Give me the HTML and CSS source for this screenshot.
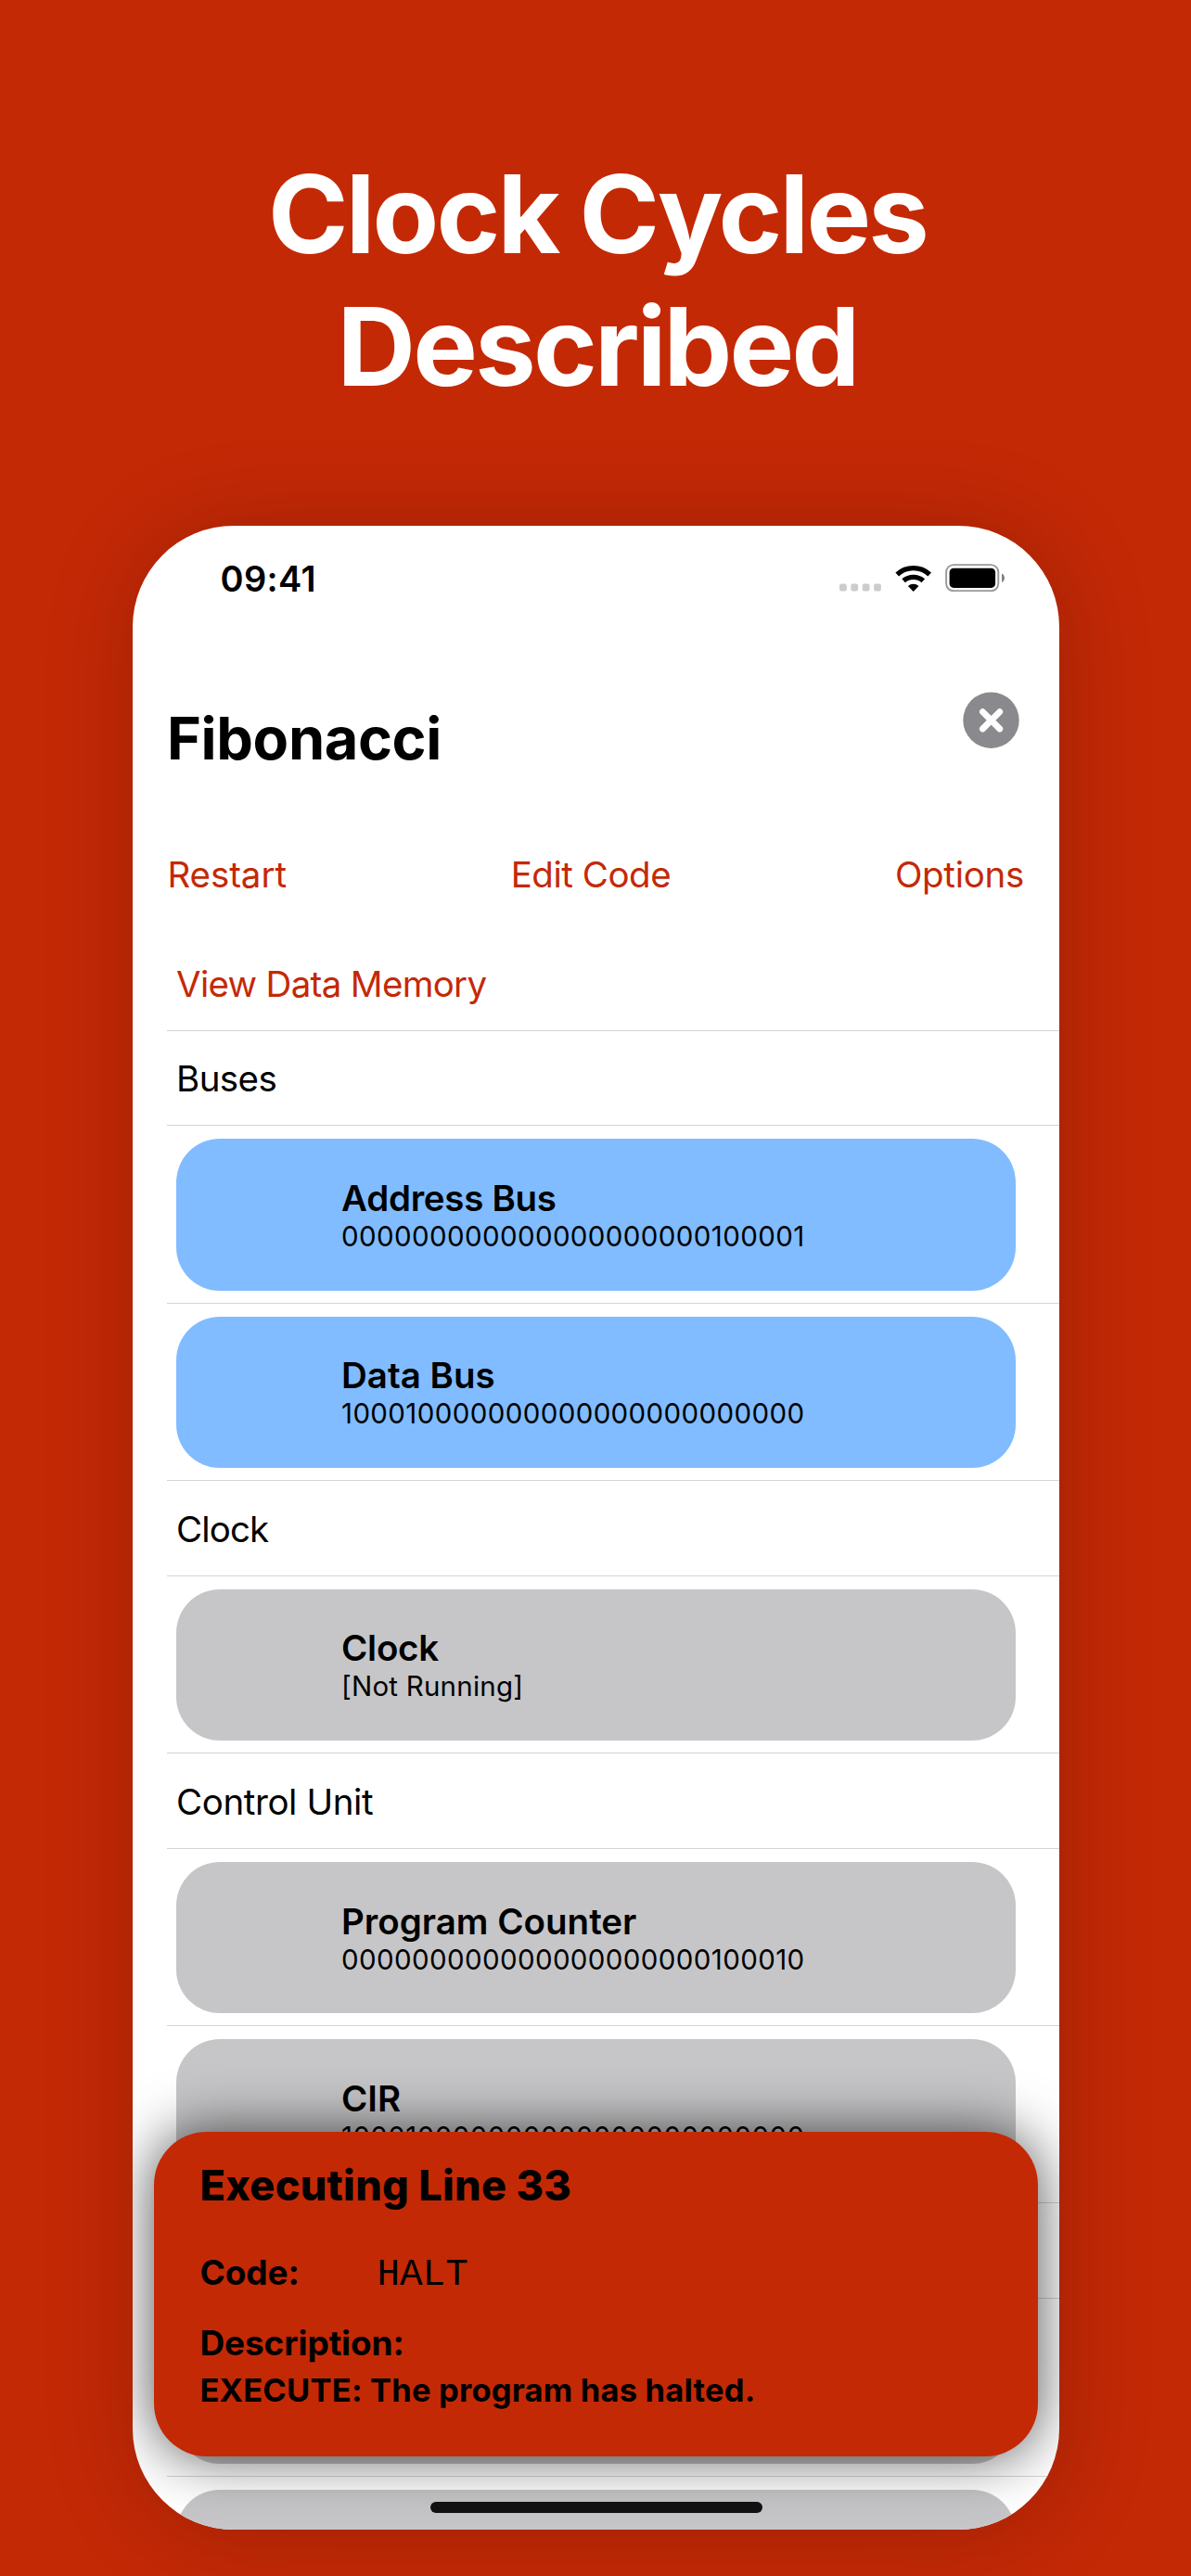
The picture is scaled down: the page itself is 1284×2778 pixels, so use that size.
FILE: index.html
```
<!DOCTYPE html>
<html lang="en">
<head>
<meta charset="utf-8">
<title>Clock Cycles Described</title>
<link rel="stylesheet" href="styles.css">
</head>
<body>
<header class="headline">
  <h1>Clock Cycles<br>Described</h1>
</header>
<main class="phone">
  <div class="status">
    <span class="time">09:41</span>
    <div class="status-icons">
      <svg width="45" height="9" viewBox="0 0 45 9" fill="#cccccc">
        <rect x="0" y="0.5" width="7.8" height="8" rx="2.2"/>
        <rect x="12.3" y="0.5" width="7.8" height="8" rx="2.2"/>
        <rect x="24.7" y="0.5" width="7.8" height="8" rx="2.2"/>
        <rect x="37.1" y="0.5" width="7.8" height="8" rx="2.2"/>
      </svg>
      <svg class="wifi" width="40" height="29" viewBox="0 0 40 29">
        <g fill="none" stroke="#000" stroke-width="5.4">
          <path d="M2.2 10.4 A26 26 0 0 1 37.2 10.4"/>
          <path d="M9.1 17.3 A16.2 16.2 0 0 1 30.3 17.3"/>
        </g>
        <path d="M13.9 22.9 A8.6 8.6 0 0 1 25.5 22.9 L20.2 28.4 Q19.7 28.9 19.2 28.4 Z"/>
      </svg>
      <svg width="65" height="30" viewBox="0 0 65 30">
        <rect x="2.1" y="1.1" width="56.2" height="28.2" rx="8" fill="none" stroke="#999" stroke-width="1.9"/>
        <rect x="5.6" y="4.7" width="49.5" height="21.2" rx="4.5"/>
        <path d="M62 10.5 Q65 12 65 15.3 Q65 18.6 62 20.1 Z" fill="#808080"/>
      </svg>
    </div>
  </div>

  <div class="title-bar">
    <h2>Fibonacci</h2>
    <svg class="close" width="61" height="61" viewBox="0 0 61 61">
      <circle cx="30.5" cy="30.7" r="30.2" fill="#8a898e"/>
      <path d="M21.4 21.6 L39.8 40 M39.8 21.6 L21.4 40" stroke="#fff" stroke-width="6.8" stroke-linecap="round"/>
    </svg>
  </div>

  <nav class="toolbar"><a class="t1">Restart</a><a class="t2">Edit Code</a><a class="t3">Options</a></nav>

  <section class="list">
    <div class="row label link">View Data Memory</div>
    <div class="row label buses">Buses</div>
    <div class="row"><div class="card blue"><b class="adr">Address Bus</b><span>000000000000000000000100001</span></div></div>
    <div class="row"><div class="card blue"><b>Data Bus</b><span>100010000000000000000000000</span></div></div>
    <div class="row label clock">Clock</div>
    <div class="row"><div class="card"><b class="adr">Clock</b><span class="state">[Not Running]</span></div></div>
    <div class="row label">Control Unit</div>
    <div class="row"><div class="card"><b>Program Counter</b><span>000000000000000000000100010</span></div></div>
    <div class="row"><div class="card"><b>CIR</b><span>100010000000000000000000000</span></div></div>
    <div class="row label"></div>
    <div class="row"><div class="card"></div></div>
    <div class="row"><div class="card"></div></div>
  </section>

  <aside class="banner">
    <h3>Executing Line 33</h3>
    <div class="code"><b>Code:</b><code>HALT</code></div>
    <b class="desc">Description:</b>
    <p>EXECUTE: The program has halted.</p>
  </aside>
  <div class="home"></div>
</main>
</body>
</html>
```
FILE: styles.css
```
* { box-sizing: border-box; margin: 0; padding: 0; }
html, body { width: 1284px; height: 2778px; overflow: hidden; }
body {
  background: #c42906;
  font-family: Inter, "Liberation Sans", sans-serif;
  color: #000;
}
svg { display: block; flex: none; }

.headline { height: 567px; padding: 159px 0 0 4px; text-align: center; }
.headline h1 {
  color: #fff;
  font-size: 117px;
  font-weight: 700;
  line-height: 143px;
  letter-spacing: -2.8px;
  word-spacing: -2px;
}

.phone {
  position: relative;
  width: 999px;
  height: 2161px;
  margin-left: 143px;
  background: #fff;
  border-radius: 109px;
  overflow: hidden;
  box-shadow: 3px 3px 100px rgba(0, 0, 0, .2);
}

.status {
  display: flex;
  justify-content: space-between;
  align-items: flex-start;
  height: 80px;
  padding: 34px 59px 0 94.5px;
}
.time { font-size: 38px; font-weight: 600; line-height: 46px; letter-spacing: .35px; }
.status-icons { display: flex; align-items: flex-end; margin-top: 7px; }
.wifi { margin: 0 13px 0 15px; }

.title-bar {
  display: flex;
  justify-content: space-between;
  align-items: flex-start;
  height: 274px;
  padding: 99px 43px 0 37px;
}
.title-bar h2 { margin-top: 12px; font-size: 63px; font-weight: 700; line-height: 76px; letter-spacing: -.38px; }

.toolbar {
  display: flex;
  justify-content: space-between;
  margin-top: -1px;
  padding: 0 38px 0 37.5px;
  font-size: 38.5px;
  line-height: 46px;
  color: #c42906;
}
.t1 { letter-spacing: -.1px; }
.t2 { letter-spacing: -.46px; }
.t3 { letter-spacing: -.29px; }

.list { margin: 42.8px 0 0 37px; }
.row { height: 191.3px; padding: 14px 47px 13px 10px; border-bottom: 1px solid #d4d4d5; }
.row.label {
  display: flex;
  align-items: center;
  height: 102.8px;
  padding: 2px 0 0 10px;
  font-size: 38.5px;
  line-height: 46px;
  letter-spacing: -.4px;
}
.row.link { color: #c42906; letter-spacing: -.68px; }
.row.buses { letter-spacing: -.56px; }
.row.clock { letter-spacing: -.88px; }

.card {
  display: flex;
  flex-direction: column;
  justify-content: center;
  height: 100%;
  padding-left: 178px;
  border-radius: 47px;
  background: #c6c6c8;
}
.card.blue { background: #80bcff; }
.card b { font-size: 38.5px; font-weight: 600; line-height: 46px; }
.card .adr { letter-spacing: -.28px; }
.card span { font-size: 29.5px; line-height: 36px; letter-spacing: .38px; }
.card .state { letter-spacing: .22px; }

.banner {
  position: absolute;
  left: 23.4px;
  top: 1732px;
  width: 952.4px;
  height: 350px;
  padding: 31px 49px 0;
  border-radius: 57px;
  background: #c42906;
  box-shadow: 0 0 62px rgba(0, 0, 0, .68);
}
.banner h3 { font-size: 45px; font-weight: 800; line-height: 54px; letter-spacing: .3px; }
.code { display: flex; align-items: baseline; height: 46px; margin-top: 44px; }
.code b { width: 191px; }
.code b, .desc { font-size: 37px; font-weight: 700; line-height: 46px; letter-spacing: -.1px; }
.code code { font: 41px/46px "Liberation Mono", monospace; }
.desc { display: block; margin-top: 30px; }
.banner p { margin-top: 7px; font-size: 34.5px; font-weight: 700; line-height: 42px; letter-spacing: .2px; }

.home {
  position: absolute;
  left: 321px;
  top: 2131px;
  width: 358px;
  height: 12px;
  border-radius: 6px;
  background: #111;
}
```
